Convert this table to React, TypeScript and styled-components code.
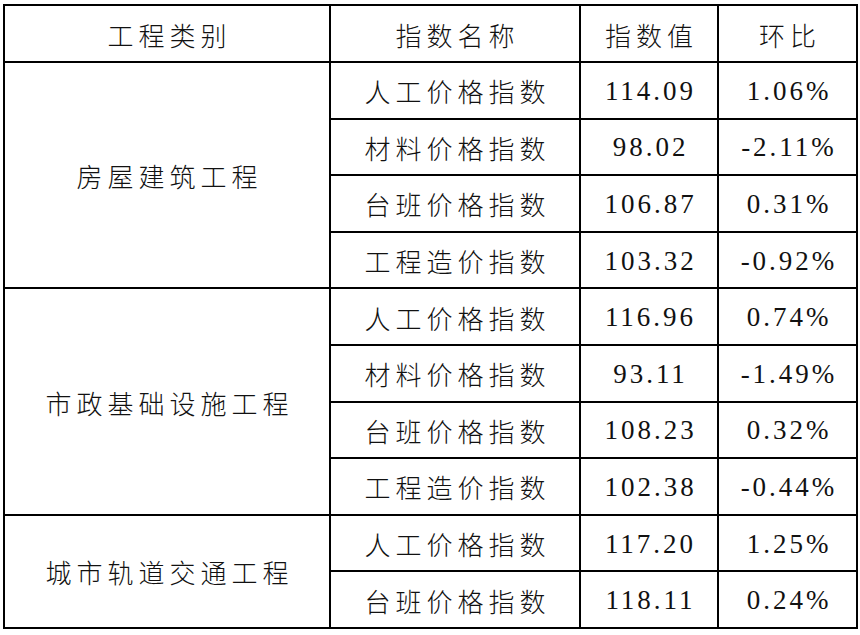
import * as React from 'react';
import styled, { createGlobalStyle } from 'styled-components';

type Item = {
  name: string;
  value: string;
  ratio: string;
}

type Group = {
  category: string;
  items: Item[];
}

const groups: Group[] = [
  {
    category: '房屋建筑工程',
    items: [
      { name: '人工价格指数', value: '114.09', ratio: '1.06%' },
      { name: '材料价格指数', value: '98.02', ratio: '-2.11%' },
      { name: '台班价格指数', value: '106.87', ratio: '0.31%' },
      { name: '工程造价指数', value: '103.32', ratio: '-0.92%' },
    ],
  },
  {
    category: '市政基础设施工程',
    items: [
      { name: '人工价格指数', value: '116.96', ratio: '0.74%' },
      { name: '材料价格指数', value: '93.11', ratio: '-1.49%' },
      { name: '台班价格指数', value: '108.23', ratio: '0.32%' },
      { name: '工程造价指数', value: '102.38', ratio: '-0.44%' },
    ],
  },
  {
    category: '城市轨道交通工程',
    items: [
      { name: '人工价格指数', value: '117.20', ratio: '1.25%' },
      { name: '台班价格指数', value: '118.11', ratio: '0.24%' },
    ],
  },
];

const GlobalStyle = createGlobalStyle`
  body {
    margin: 0;
    background: #ffffff;
  }
`

const Page = styled.div`
  padding: 4px 0 0 3px;
`

const Table = styled.table`
  width: 853px;
  border-collapse: collapse;
  table-layout: fixed;
  color: #111;
`

const HeadRow = styled.tr`
  height: 57px;
`

const BodyRow = styled.tr`
  height: 56.6px;
`

const Cell = styled.td`
  border: 2px solid #000;
  padding: 2px 0 0 5px;
  text-align: center;
  vertical-align: middle;
  white-space: nowrap;
  font-family: "Noto Sans CJK SC", sans-serif;
  font-size: 26px;
  font-weight: 300;
  letter-spacing: 5px;
  line-height: 1;
`

const HeadCell = styled.th`
  border: 2px solid #000;
  padding: 2px 0 0 5px;
  text-align: center;
  vertical-align: middle;
  white-space: nowrap;
  font-family: "Noto Sans CJK SC", sans-serif;
  font-size: 26px;
  font-weight: 300;
  letter-spacing: 5px;
  line-height: 1;
`

const NumCell = styled.td`
  border: 2px solid #000;
  padding: 2px 0 0 3px;
  text-align: center;
  vertical-align: middle;
  white-space: nowrap;
  font-family: "Liberation Serif", "Times New Roman", serif;
  font-size: 27px;
  font-weight: 400;
  letter-spacing: 3px;
  line-height: 1;
`

function App() {
  return (
    <Page>
      <GlobalStyle />
      <Table>
        <colgroup>
          <col style={{ width: 326 }} />
          <col style={{ width: 250 }} />
          <col style={{ width: 138 }} />
          <col style={{ width: 139 }} />
        </colgroup>
        <thead>
          <HeadRow>
            <HeadCell>工程类别</HeadCell>
            <HeadCell>指数名称</HeadCell>
            <HeadCell>指数值</HeadCell>
            <HeadCell>环比</HeadCell>
          </HeadRow>
        </thead>
        <tbody>
          {groups.map(group =>
            group.items.map((item, i) => (
              <BodyRow key={group.category + item.name}>
                {i === 0 && <Cell rowSpan={group.items.length}>{group.category}</Cell>}
                <Cell>{item.name}</Cell>
                <NumCell>{item.value}</NumCell>
                <NumCell>{item.ratio}</NumCell>
              </BodyRow>
            ))
          )}
        </tbody>
      </Table>
    </Page>
  )
}

export default App;
